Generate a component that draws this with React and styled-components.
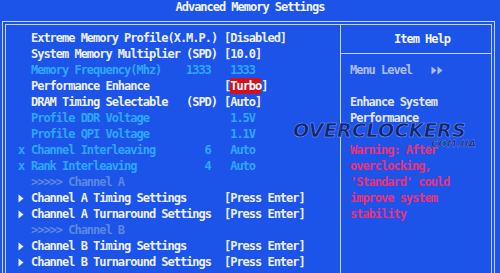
import React from "react";
import styled, { createGlobalStyle } from "styled-components";

const Global = createGlobalStyle`
  html, body { margin: 0; padding: 0; background: #1d55e8; }
`;

const LINE = "#c6d2ff";

const Page = styled.div`
  position: relative;
  width: 500px;
  height: 273px;
  overflow: hidden;
  background: #1c54e9;
  font-family: "DejaVu Sans Mono", "Liberation Mono", monospace;
  font-weight: bold;
  font-size: 12px;
  letter-spacing: -1.02px;
  line-height: 16px;
  color: #eef0ff;
`;

const Title = styled.header`
  height: 21px;
  line-height: 14px;
  text-align: center;
  color: #f2f4ff;
`;

const Frame = styled.div`
  margin-left: 2px;
  width: 493px;
  box-sizing: border-box;
  border: 1px solid ${LINE};
  padding: 2px;
`;

const Inner = styled.div`
  display: flex;
  min-height: 270px;
  border: 1px solid ${LINE};
`;

const LeftPanel = styled.section`
  width: 334px;
  box-sizing: border-box;
  padding: 5px 0 0 11px;
`;

const RightPanel = styled.aside`
  flex: 1;
  border-left: 1px solid ${LINE};
`;

const HelpHeader = styled.div`
  height: 29px;
  box-sizing: border-box;
  padding-left: 12px;
  border-bottom: 1px solid ${LINE};
  display: flex;
  align-items: center;
  justify-content: center;
  color: #f4f6ff;
`;

const HelpBody = styled.div`
  padding: 8px 0 0 9px;
`;

const HelpLine = styled.div`
  height: 16px;
  white-space: pre;
  display: flex;
  align-items: center;
  color: ${(p) =>
    p.$tone === "warn" ? "#e8327a" : p.$tone === "dim" ? "#aebdf0" : "#e2e7ff"};
`;

const ROW_COLORS = {
  active: "#eef0ff",
  disabled: "#2ea6ff",
  section: "#5d87e4",
};

const Row = styled.div`
  display: grid;
  grid-template-columns: 14px 155px 38px auto;
  height: 16px;
  white-space: pre;
  color: ${(p) => ROW_COLORS[p.$variant]};
`;

const Marker = styled.span`
  display: flex;
  align-items: center;
  padding-left: 1px;
`;

const Label = styled.span`
  overflow: visible;
`;

const Mid = styled.span``;

const Value = styled.span``;

const Highlight = styled.span`
  background: #d3121f;
  color: #ffffff;
  padding: 1px 0;
`;

const Arrow = () => (
  <svg width="6" height="9" viewBox="0 0 6 9">
    <path d="M0.5 0.5 L5.5 4.5 L0.5 8.5 Z" fill="#eef0ff" />
  </svg>
);

const DoubleArrow = () => (
  <svg width="12" height="9" viewBox="0 0 12 9">
    <path d="M0.5 0.5 L5.5 4.5 L0.5 8.5 Z M6.5 0.5 L11.5 4.5 L6.5 8.5 Z" fill="#aebdf0" />
  </svg>
);

const Watermark = styled.div`
  position: absolute;
  left: 293px;
  top: 121px;
  pointer-events: none;
  font-family: "DejaVu Sans", sans-serif;
  font-style: italic;
  font-weight: bold;
  letter-spacing: 0;
`;

const LogoWord = styled.div`
  font-size: 19px;
  line-height: 19px;
  letter-spacing: 0.3px;
  color: rgba(16, 30, 92, 0.85);
  -webkit-text-stroke: 0.5px rgba(160, 182, 250, 0.8);
`;

const LogoDomain = styled.div`
  margin-left: 134px;
  font-size: 9px;
  line-height: 9px;
  letter-spacing: 0.8px;
  color: rgba(16, 30, 92, 0.85);
  -webkit-text-stroke: 0.35px rgba(160, 182, 250, 0.8);
`;

const rows = [
  { v: "active", label: "Extreme Memory Profile(X.M.P.)", value: "[Disabled]" },
  { v: "active", label: "System Memory Multiplier", mid: "(SPD)", value: "[10.0]" },
  { v: "disabled", label: "Memory Frequency(Mhz)", mid: "1333", value: " 1333" },
  { v: "active", label: "Performance Enhance", value: "turbo" },
  { v: "active", label: "DRAM Timing Selectable", mid: "(SPD)", value: "[Auto]" },
  { v: "disabled", label: "Profile DDR Voltage", value: " 1.5V" },
  { v: "disabled", label: "Profile QPI Voltage", value: " 1.1V" },
  { v: "disabled", marker: "x", label: "Channel Interleaving", mid: "   6", value: " Auto" },
  { v: "disabled", marker: "x", label: "Rank Interleaving", mid: "   4", value: " Auto" },
  { v: "section", label: ">>>>> Channel A" },
  { v: "active", marker: "arrow", label: "Channel A Timing Settings", value: "[Press Enter]" },
  { v: "active", marker: "arrow", label: "Channel A Turnaround Settings", value: "[Press Enter]" },
  { v: "section", label: ">>>>> Channel B" },
  { v: "active", marker: "arrow", label: "Channel B Timing Settings", value: "[Press Enter]" },
  { v: "active", marker: "arrow", label: "Channel B Turnaround Settings", value: "[Press Enter]" },
];

export default function App() {
  return (
    <Page>
      <Global />
      <Title>Advanced Memory Settings</Title>
      <Frame>
        <Inner>
          <LeftPanel>
            {rows.map((r, i) => (
              <Row key={i} $variant={r.v}>
                <Marker>
                  {r.marker === "arrow" ? <Arrow /> : r.marker === "x" ? "x" : ""}
                </Marker>
                <Label>{r.label}</Label>
                <Mid>{r.mid || ""}</Mid>
                <Value>
                  {r.value === "turbo" ? (
                    <>
                      [<Highlight>Turbo</Highlight>]
                    </>
                  ) : (
                    r.value || ""
                  )}
                </Value>
              </Row>
            ))}
          </LeftPanel>
          <RightPanel>
            <HelpHeader>Item Help</HelpHeader>
            <HelpBody>
              <HelpLine $tone="dim">
                {"Menu Level   "}
                <DoubleArrow />
              </HelpLine>
              <HelpLine>{" "}</HelpLine>
              <HelpLine>Enhance System</HelpLine>
              <HelpLine>Performance</HelpLine>
              <HelpLine>{" "}</HelpLine>
              <HelpLine $tone="warn">Warning: After</HelpLine>
              <HelpLine $tone="warn">overclocking,</HelpLine>
              <HelpLine $tone="warn">'Standard' could</HelpLine>
              <HelpLine $tone="warn">improve system</HelpLine>
              <HelpLine $tone="warn">stability</HelpLine>
            </HelpBody>
          </RightPanel>
        </Inner>
      </Frame>
      <Watermark>
        <LogoWord>OVERCLOCKERS</LogoWord>
        <LogoDomain>.COM.UA</LogoDomain>
      </Watermark>
    </Page>
  );
}
